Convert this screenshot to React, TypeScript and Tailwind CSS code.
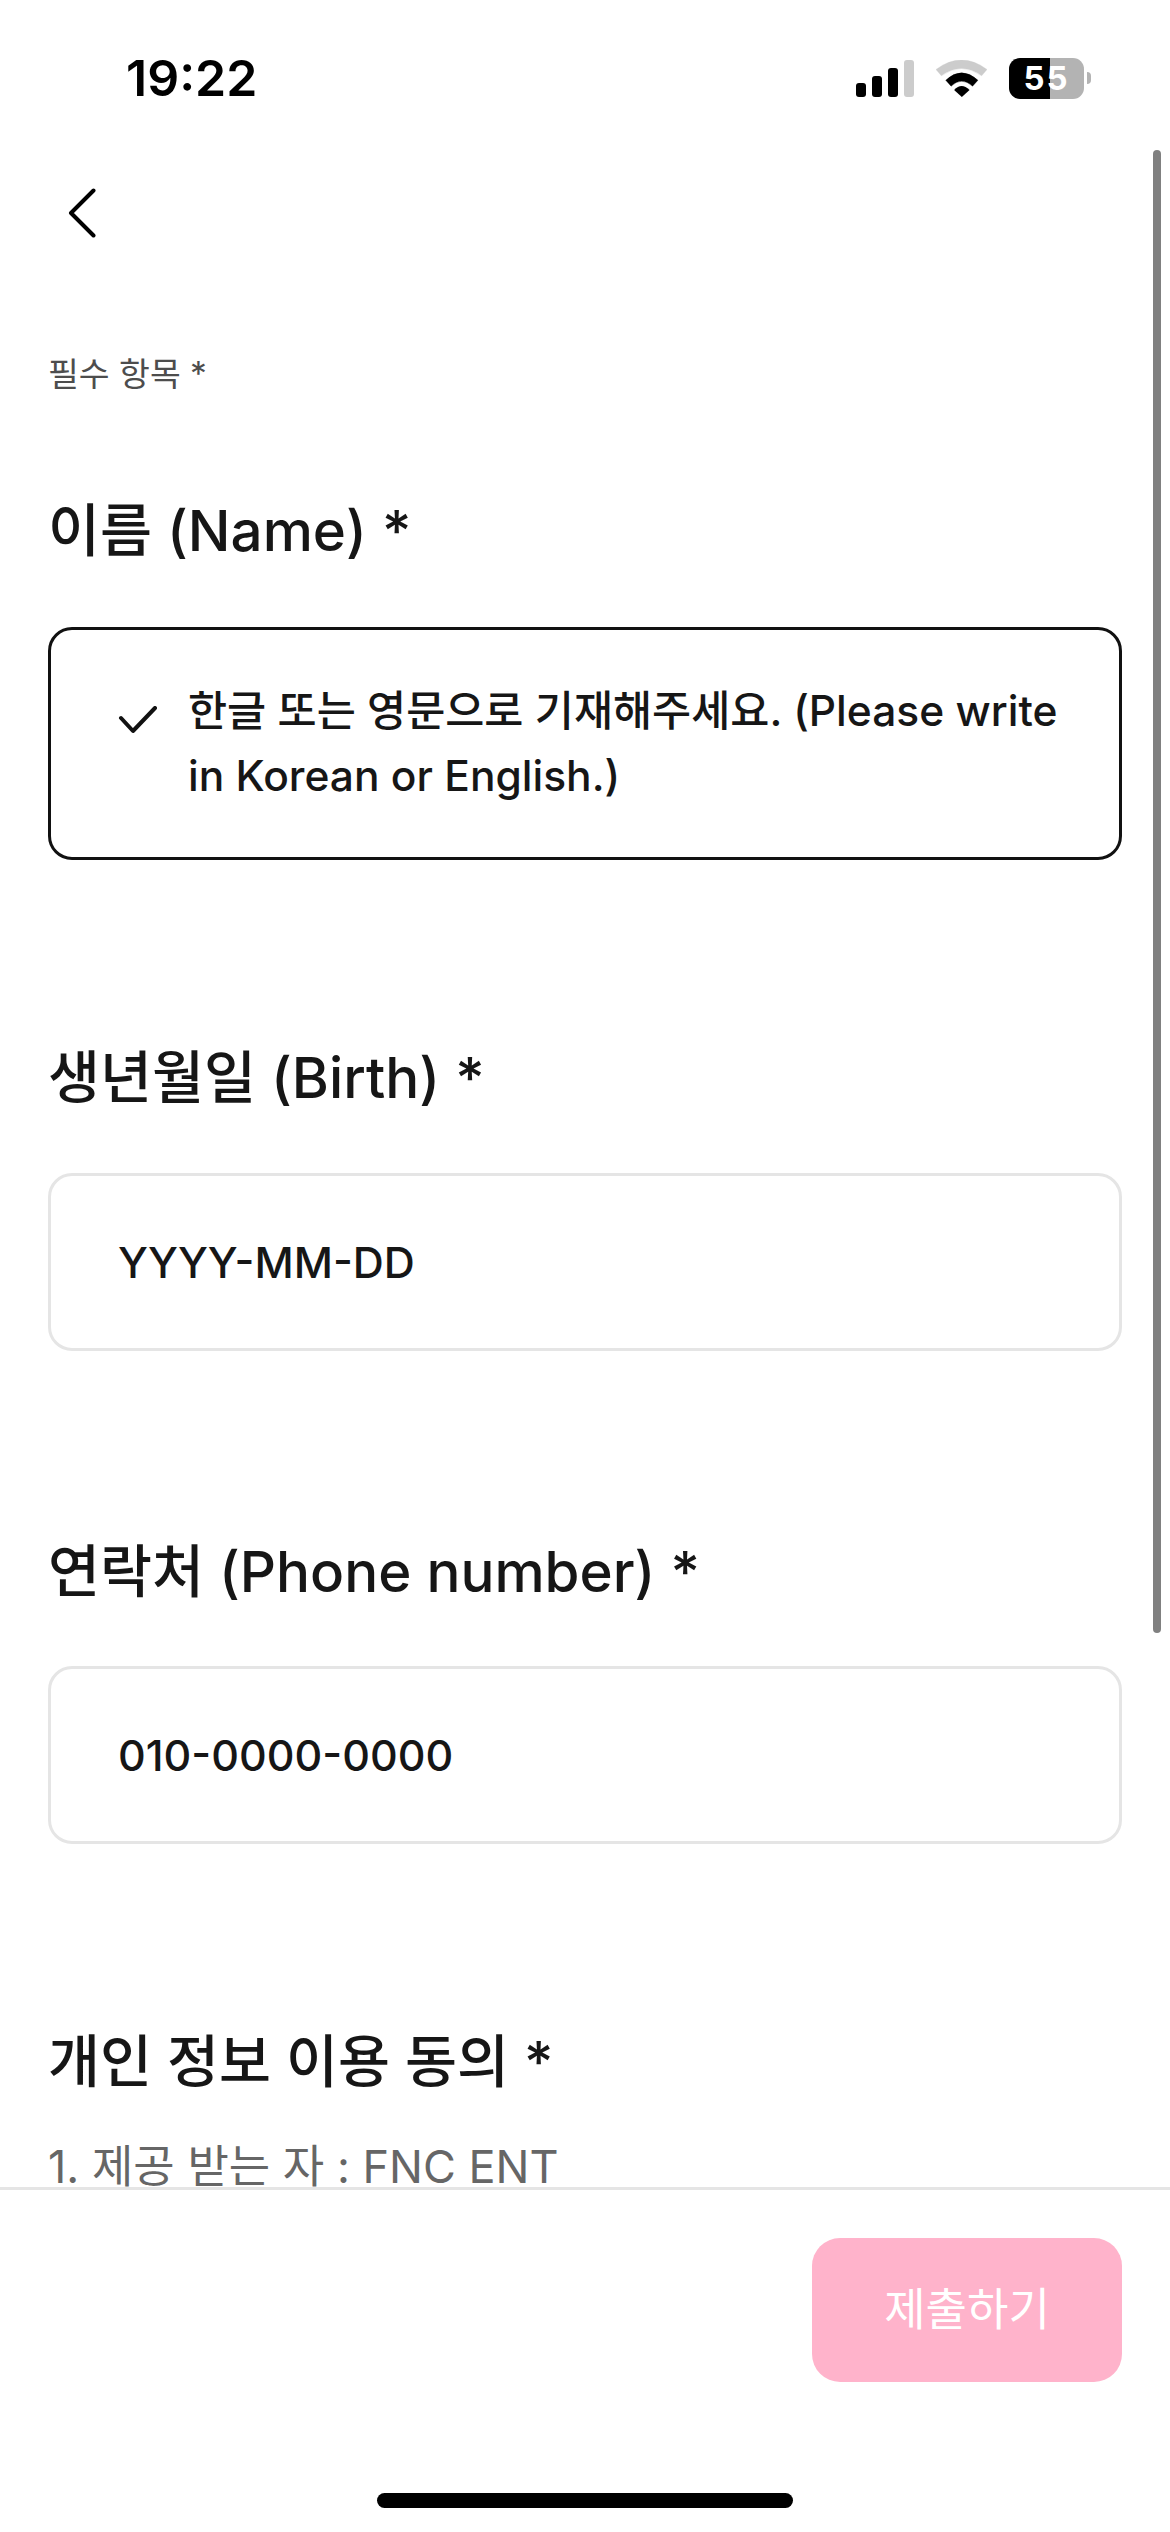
import React from "react";

const font = { fontFamily: '"Inter", "Noto Sans CJK KR", sans-serif' };

function Field({ label, className, children }: { label: string; className: string; children: React.ReactNode }) {
  return (
    <section className={className}>
      <h2 className="h-[70px] pt-[6px] text-[56.5px] leading-[64px] font-medium text-[#161616] whitespace-nowrap">{label}</h2>
      {children}
    </section>
  );
}

function Signal() {
  return (
    <div className="flex items-end gap-[6px] h-[37px] w-[58px]">
      <div className="w-[10px] h-[14px] rounded-[3px] bg-black" />
      <div className="w-[10px] h-[21px] rounded-[3px] bg-black" />
      <div className="w-[10px] h-[29px] rounded-[3px] bg-black" />
      <div className="w-[10px] h-[37px] rounded-[3px] bg-[#cccccc]" />
    </div>
  );
}

function Wifi() {
  return (
    <svg width="51" height="37" viewBox="408 87 152 110" className="ml-[22px]">
      <path d="M408 115 Q484 59 560 115 L544 134 Q484 91 424 134 Z" fill="#cccccc" stroke="#cccccc" strokeWidth="1" strokeLinejoin="round" />
      <path d="M437 147 Q484 103 533 147 L517 165 Q484 135 453 165 Z" fill="#000" stroke="#000" strokeWidth="1" strokeLinejoin="round" />
      <path d="M462 176 Q484 152 508 176 L485 197 Z" fill="#000" />
    </svg>
  );
}

function Battery() {
  return (
    <div className="ml-[22px] flex items-center">
      <div className="relative flex h-[41px] w-[75px] items-center justify-center overflow-hidden rounded-[11px] bg-[linear-gradient(90deg,#000_0,#000_41px,#b3b3b3_41px,#b3b3b3_100%)]">
        <span className="text-[33px] leading-none font-bold tracking-[2px] text-white">55</span>
      </div>
      <div className="ml-[3px] h-[12px] w-[4px] rounded-r-full bg-[#b3b3b3]" />
    </div>
  );
}

export default function App() {
  return (
    <div className="relative flex h-[2532px] w-[1170px] flex-col overflow-hidden bg-white" style={font}>
      <header className="flex h-[156px] shrink-0 items-center justify-between pl-[126px] pr-[79px]">
        <span className="text-[50px] leading-none font-semibold text-black">19:22</span>
        <div className="flex items-center">
          <Signal />
          <Wifi />
          <Battery />
        </div>
      </header>

      <main className="min-h-0 flex-1 overflow-hidden px-[48px]">
        <div className="flex h-[114px] items-center pl-[20px]">
          <svg width="28" height="50" viewBox="0 0 28 50" fill="none">
            <path d="M25.5 2.5 L3 25 L25.5 47.5" stroke="#000" strokeWidth="4" strokeLinecap="round" strokeLinejoin="round" />
          </svg>
        </div>

        <p className="mt-[84px] h-[40px] text-[33.5px] leading-[40px] text-[#4d4d4d]">필수 항목 *</p>

        <Field label="이름 (Name) *" className="mt-[99px]">
          <div className="mt-[64px] flex h-[233px] w-[1074px] rounded-[24px] border-[3px] border-[#111111] pl-[67px] pr-[50px] pt-[48px]">
            <svg width="40" height="28" viewBox="0 0 40 28" fill="none" className="mt-[28px] shrink-0">
              <path d="M3 12 L15 25 L37 2" stroke="#111" strokeWidth="4" strokeLinecap="round" strokeLinejoin="round" />
            </svg>
            <p className="ml-[30px] text-[42.5px] leading-[65px] font-medium text-[#161616]">
              한글 또는 영문으로 기재해주세요. (Please write in Korean or English.)
            </p>
          </div>
        </Field>

        <Field label="생년월일 (Birth) *" className="mt-[180px]">
          <div className="mt-[63px] flex h-[178px] w-[1074px] items-center rounded-[24px] border-[3px] border-[#e5e5e5] pl-[67px] text-[43px] font-medium text-[#161616]">
            YYYY-MM-DD
          </div>
        </Field>

        <Field label="연락처 (Phone number) *" className="mt-[183px]">
          <div className="mt-[62px] flex h-[178px] w-[1074px] items-center rounded-[24px] border-[3px] border-[#e5e5e5] pl-[67px] text-[43px] font-medium text-[#161616]">
            010-0000-0000
          </div>
        </Field>

        <Field label="개인 정보 이용 동의 *" className="mt-[180px]">
          <p className="mt-[43px] text-[45px] leading-[60px] text-[#666666] whitespace-nowrap">1. 제공 받는 자 : FNC ENT</p>
        </Field>
      </main>

      <footer className="flex h-[345px] shrink-0 flex-col border-t-[3px] border-[#e5e5e5] bg-white">
        <div className="mt-[48px] flex justify-end pr-[48px]">
          <button className="flex h-[144px] w-[310px] items-center justify-center rounded-[28px] bg-[#ffb3cb] text-[45px] font-normal text-white">
            제출하기
          </button>
        </div>
        <div className="mx-auto mt-[111px] h-[15px] w-[416px] rounded-full bg-black" />
      </footer>

      <div className="absolute left-[1153px] top-[150px] h-[1483px] w-[8px] rounded-full bg-[#808080]" />
    </div>
  );
}
